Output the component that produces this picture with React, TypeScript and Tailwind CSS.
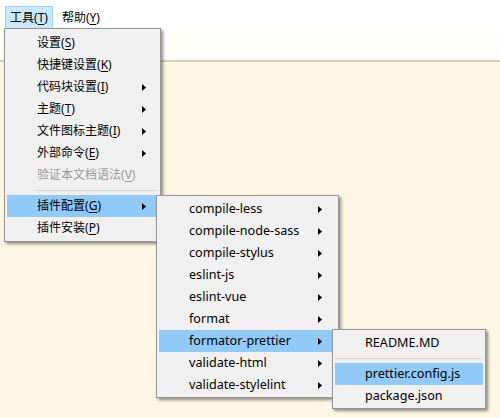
import React from "react";

type Item =
  | { type: "sep" }
  | { type: "item"; label: string; key?: string; arrow?: boolean; disabled?: boolean; active?: boolean };

const font = { fontFamily: '"Noto Sans", "Noto Sans CJK SC", sans-serif' };

function Arrow() {
  return (
    <svg width="4" height="7" viewBox="0 0 4 7" className="block">
      <polygon points="0,0 4,3.5 0,7" fill="#000" />
    </svg>
  );
}

function Label({ label, k }: { label: string; k?: string }) {
  if (!k) return <span>{label}</span>;
  return (
    <span>
      {label}(<span className="underline underline-offset-2">{k}</span>)
    </span>
  );
}

function Menu({ items, arrowRight, sepLeft }: { items: Item[]; arrowRight: string; sepLeft: string }) {
  return (
    <div className="flex flex-col">
      {items.map((it, i) =>
        it.type === "sep" ? (
          <div key={i} className={`h-[9px] flex items-center ${sepLeft}`}>
            <div className="h-px w-full bg-[#d7d7d7]" />
          </div>
        ) : (
          <div
            key={i}
            className={`h-[22px] flex items-center pl-[30px] ${it.active ? "bg-[#91c9f7]" : ""} ${
              it.disabled ? "text-[#9a9a9a]" : "text-black"
            }`}
          >
            <div className="flex-1 leading-none">
              <Label label={it.label} k={it.key} />
            </div>
            {it.arrow && <div className={arrowRight}><Arrow /></div>}
          </div>
        )
      )}
    </div>
  );
}

const menu1: Item[] = [
  { type: "item", label: "设置", key: "S" },
  { type: "item", label: "快捷键设置", key: "K" },
  { type: "item", label: "代码块设置", key: "I", arrow: true },
  { type: "item", label: "主题", key: "T", arrow: true },
  { type: "item", label: "文件图标主题", key: "I", arrow: true },
  { type: "item", label: "外部命令", key: "E", arrow: true },
  { type: "item", label: "验证本文档语法", key: "V", disabled: true },
  { type: "sep" },
  { type: "item", label: "插件配置", key: "G", arrow: true, active: true },
  { type: "item", label: "插件安装", key: "P" },
];

const menu2: Item[] = [
  { type: "item", label: "compile-less", arrow: true },
  { type: "item", label: "compile-node-sass", arrow: true },
  { type: "item", label: "compile-stylus", arrow: true },
  { type: "item", label: "eslint-js", arrow: true },
  { type: "item", label: "eslint-vue", arrow: true },
  { type: "item", label: "format", arrow: true },
  { type: "item", label: "formator-prettier", arrow: true, active: true },
  { type: "item", label: "validate-html", arrow: true },
  { type: "item", label: "validate-stylelint", arrow: true },
];

const menu3: Item[] = [
  { type: "item", label: "README.MD" },
  { type: "sep" },
  { type: "item", label: "prettier.config.js", active: true },
  { type: "item", label: "package.json" },
];

const panel =
  "absolute bg-[#f0f0f0] border border-[#979797] shadow-[2px_2px_3px_rgba(0,0,0,0.45)] px-[2px]";

export default function App() {
  return (
    <div className="relative w-[500px] h-[418px] overflow-hidden bg-[#fdf6e3] text-[12px]" style={font}>
      {/* menubar */}
      <div className="h-[28px] bg-white flex items-start pt-[6px] pl-[5px] gap-[4px]">
        <div className="h-[23px] px-[4px] flex items-center bg-[#cce8ff] border border-[#99d1ff] border-b-0">
          <Label label="工具" k="T" />
        </div>
        <div className="h-[23px] px-[5px] flex items-center">
          <Label label="帮助" k="Y" />
        </div>
      </div>
      {/* strip */}
      <div className="h-[34px] bg-[#fffdf8] border-b-2 border-[#d4cfc2]" />

      <div className={`${panel} left-[4px] top-[28px] w-[157px] pt-[3px] pb-[2px] text-[12px]`}>
        <Menu items={menu1} arrowRight="mr-[12px]" sepLeft="pl-[28px]" />
      </div>
      <div className={`${panel} left-[156px] top-[195px] w-[183px] pt-[2px] pb-[1px] text-[12.6px]`}>
        <Menu items={menu2} arrowRight="mr-[14px]" sepLeft="pl-[28px]" />
      </div>
      <div className={`${panel} left-[332px] top-[329px] w-[154px] pt-[2px] pb-[1px] text-[12.6px]`}>
        <Menu items={menu3} arrowRight="mr-[14px]" sepLeft="pl-0" />
      </div>
    </div>
  );
}
